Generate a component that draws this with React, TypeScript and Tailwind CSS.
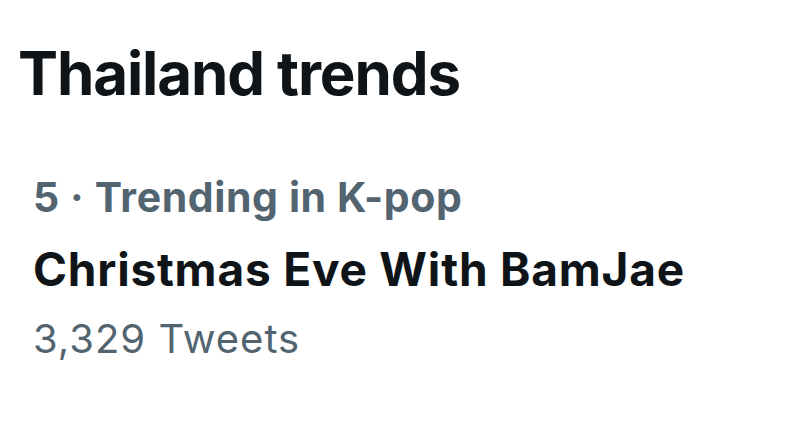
export default function App() {
  return (
    <div className="w-[809px] h-[437px] bg-white overflow-hidden font-['Inter','Liberation_Sans',sans-serif]">
      <h1 className="pt-[37px] pl-[18px] text-[60px] leading-[72px] font-bold text-[#0f1419] tracking-[-1.1px]">
        Thailand trends
      </h1>
      <div className="pl-[33px] mt-[64px]">
        <div className="text-[41px] leading-[48px] font-bold text-[#536471] tracking-[0.6px]">5 · Trending in K-pop</div>
        <div className="mt-[21px] text-[46px] leading-[54px] font-bold text-[#0f1419] tracking-[0.8px]">Christmas Eve With BamJae</div>
        <div className="mt-[19px] text-[40px] leading-[48px] text-[#536471] tracking-[1px]">3,329 Tweets</div>
      </div>
    </div>
  );
}
